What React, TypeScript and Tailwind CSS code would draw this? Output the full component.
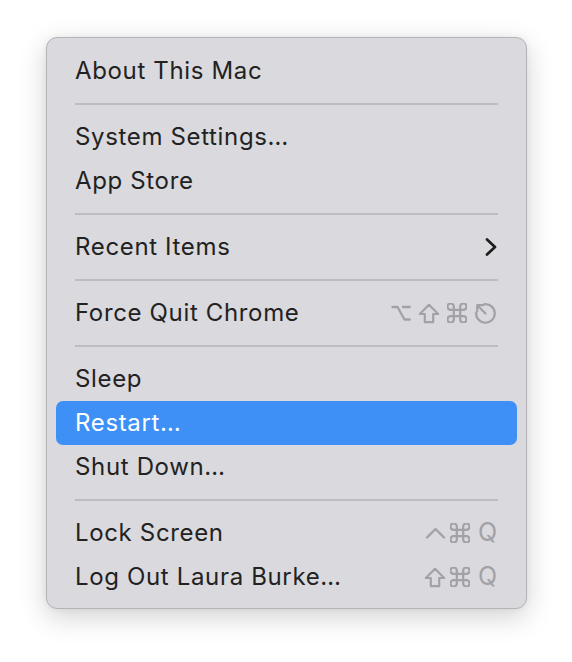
import React from "react";

const G = "#a1a1a6";

const Opt = () => (
  <svg width="20" height="20" viewBox="0 0 20 20" fill="none" stroke={G} strokeWidth="2.3" strokeLinecap="round" strokeLinejoin="round">
    <path d="M1.5 4H6.5L13.5 16.5H18.8M12 4H18.8" />
  </svg>
);
const Shift = () => (
  <svg width="22" height="21" viewBox="0 0 22 21" fill="none" stroke={G} strokeWidth="2.2" strokeLinejoin="round">
    <path d="M11 1.8L20.2 11H15.2V19.2H6.8V11H1.8Z" />
  </svg>
);
const Cmd = () => (
  <svg width="20" height="20" viewBox="2.6 2.6 18.8 18.8" fill="none" stroke={G} strokeWidth="2.1" strokeLinecap="round" strokeLinejoin="round">
    <path d="M15 6v12a3 3 0 1 0 3-3H6a3 3 0 1 0 3 3V6a3 3 0 1 0-3 3h12a3 3 0 1 0-3-3" />
  </svg>
);
const Esc = () => (
  <svg width="23" height="23" viewBox="0 0 23 23" fill="none" stroke={G} strokeWidth="2.2" strokeLinecap="round" strokeLinejoin="round">
    <path d="M10.5 2.2A9.3 9.3 0 1 1 2.2 10.5" />
    <path d="M11.5 11.5L3.2 3.2M3.2 3.2V9.2M3.2 3.2H9.2" />
  </svg>
);
const Caret = () => (
  <svg width="21" height="14" viewBox="0 0 21 14" fill="none" stroke={G} strokeWidth="2.4" strokeLinecap="round" strokeLinejoin="round">
    <path d="M2 11.5L10.5 3L19 11.5" />
  </svg>
);
const Q = () => <span className="text-[25px] leading-none text-[#a1a1a6]">Q</span>;

const Chevron = () => (
  <svg width="14" height="20" viewBox="0 0 14 20" fill="none" stroke="#1e1e1e" strokeWidth="2.7" strokeLinecap="round" strokeLinejoin="round">
    <path d="M3 2.5L11 10L3 17.5" />
  </svg>
);

function Row({ label, active, right }: { label: string; active?: boolean; right?: React.ReactNode }) {
  return (
    <div
      className={`flex h-[44px] items-center justify-between rounded-[7px] pl-[19px] pr-[20px] ${
        active ? "bg-[#3e8ff6] text-white" : "text-[#222222]"
      }`}
    >
      <span className="text-[24px] leading-none tracking-[0.65px]">{label}</span>
      {right}
    </div>
  );
}

const Sep = () => (
  <div className="flex h-[22px] items-center pl-[19px] pr-[19px]">
    <div className="h-[1.5px] w-full bg-[#bdbdc1]" />
  </div>
);

export default function App() {
  return (
    <div className="min-h-[662px] w-[572px] bg-white pl-[46px] pt-[37px]" style={{ fontFamily: "Inter, 'Noto Sans', sans-serif" }}>
      <div className="w-[481px] rounded-[11px] border border-[#b4b4b8] bg-[#d9d9de] px-[9px] pb-[9px] pt-[11px] shadow-[0_8px_28px_rgba(0,0,0,0.18),0_0_6px_rgba(0,0,0,0.06)]">
        <Row label="About This Mac" />
        <Sep />
        <Row label="System Settings…" />
        <Row label="App Store" />
        <Sep />
        <Row label="Recent Items" right={<span className="mr-[-1px]"><Chevron /></span>} />
        <Sep />
        <Row
          label="Force Quit Chrome"
          right={
            <div className="flex items-center gap-[7px]">
              <Opt />
              <Shift />
              <Cmd />
              <Esc />
            </div>
          }
        />
        <Sep />
        <Row label="Sleep" />
        <Row label="Restart…" active />
        <Row label="Shut Down…" />
        <Sep />
        <Row
          label="Lock Screen"
          right={
            <div className="flex items-center gap-[4px]">
              <Caret />
              <Cmd />
              <span className="ml-[4px]"><Q /></span>
            </div>
          }
        />
        <Row
          label="Log Out Laura Burke…"
          right={
            <div className="flex items-center gap-[4px]">
              <Shift />
              <Cmd />
              <span className="ml-[4px]"><Q /></span>
            </div>
          }
        />
      </div>
    </div>
  );
}
